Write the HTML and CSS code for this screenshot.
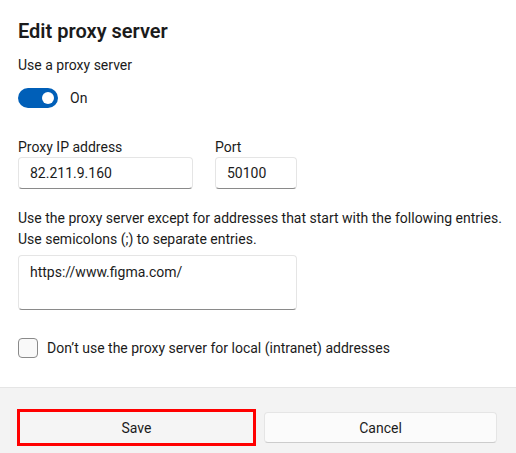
FILE: index.html
```html
<!DOCTYPE html>
<html lang="en">
<head>
<meta charset="utf-8">
<title>Edit proxy server</title>
<link rel="stylesheet" href="styles.css">
</head>
<body>
<div class="dialog">
  <div class="content">
    <h1 class="title">Edit proxy server</h1>
    <div class="label first">Use a proxy server</div>
    <div class="toggle-row">
      <span class="toggle"><span class="knob"></span></span>
      <span class="toggle-text">On</span>
    </div>
    <div class="fields">
      <div class="field ip">
        <div class="label">Proxy IP address</div>
        <div class="input">82.211.9.160</div>
      </div>
      <div class="field port">
        <div class="label">Port</div>
        <div class="input">50100</div>
      </div>
    </div>
    <p class="desc">Use the proxy server except for addresses that start with the following entries.<br>Use semicolons (;) to separate entries.</p>
    <div class="textarea">https://www.figma.com/</div>
    <div class="check-row">
      <span class="checkbox"></span>
      <span class="check-text">Don’t use the proxy server for local (intranet) addresses</span>
    </div>
  </div>
  <div class="footer">
    <button class="btn save">Save</button>
    <button class="btn">Cancel</button>
  </div>
</div>
</body>
</html>
```
FILE: styles.css
```css
html, body {
  margin: 0;
  padding: 0;
  background: #ffffff;
}
body {
  font-family: "Segoe UI", Roboto, "Noto Sans", sans-serif;
  font-size: 14px;
  color: #1b1b1b;
  width: 516px;
  height: 453px;
  overflow: hidden;
}
.dialog {
  display: flex;
  flex-direction: column;
  height: 453px;
}
.content {
  padding: 17px 18px 0 18px;
}
.title {
  margin: 0;
  font-size: 20px;
  line-height: 28px;
  font-weight: 600;
}
.label {
  line-height: 19px;
}
.label.first {
  margin-top: 10px;
  line-height: 20px;
}
.toggle-row {
  display: flex;
  align-items: center;
  gap: 12px;
  margin-top: 13px;
  height: 20px;
}
.toggle {
  width: 40px;
  height: 20px;
  border-radius: 10px;
  background: #005fb8;
  display: flex;
  align-items: center;
  justify-content: flex-end;
  padding-right: 4px;
  box-sizing: border-box;
}
.knob {
  width: 12px;
  height: 12px;
  border-radius: 50%;
  background: #ffffff;
}
.fields {
  display: flex;
  gap: 22px;
  margin-top: 30px;
}
.field.ip { width: 175px; }
.field.port { width: 82px; }
.input {
  box-sizing: border-box;
  height: 32px;
  border: 1px solid #e5e5e5;
  border-bottom-color: #8a8a8a;
  border-radius: 4px;
  padding: 0 11px;
  display: flex;
  align-items: center;
  background: #ffffff;
}
.desc {
  margin: 19px 0 0 0;
  line-height: 21px;
  white-space: nowrap;
}
.textarea {
  box-sizing: border-box;
  width: 279px;
  height: 55px;
  margin-top: 5px;
  border: 1px solid #e5e5e5;
  border-bottom-color: #8a8a8a;
  border-radius: 4px;
  padding: 6px 11px;
  line-height: 20px;
}
.check-row {
  display: flex;
  align-items: center;
  gap: 9px;
  margin-top: 28px;
  height: 20px;
}
.checkbox {
  box-sizing: border-box;
  width: 20px;
  height: 20px;
  border: 1px solid #8a8a8a;
  border-radius: 4px;
  background: #f9f9f9;
}
.footer {
  margin-top: 29px;
  flex: 1;
  background: #f3f3f3;
  border-top: 1px solid #e5e5e5;
  display: grid;
  grid-template-columns: 1fr 1fr;
  column-gap: 11px;
  padding: 24px 19px 0 20px;
  align-items: start;
}
.btn {
  font-family: inherit;
  font-size: 14px;
  color: #1b1b1b;
  height: 31px;
  border: 1px solid #e5e5e5;
  border-bottom-color: #cccccc;
  border-radius: 4px;
  background: #fbfbfb;
  padding: 0;
}
.btn.save {
  background: #f5f5f5;
  outline: 3px solid #ff0000;
  border-radius: 0;
  border-color: #f5f5f5;
}
```
